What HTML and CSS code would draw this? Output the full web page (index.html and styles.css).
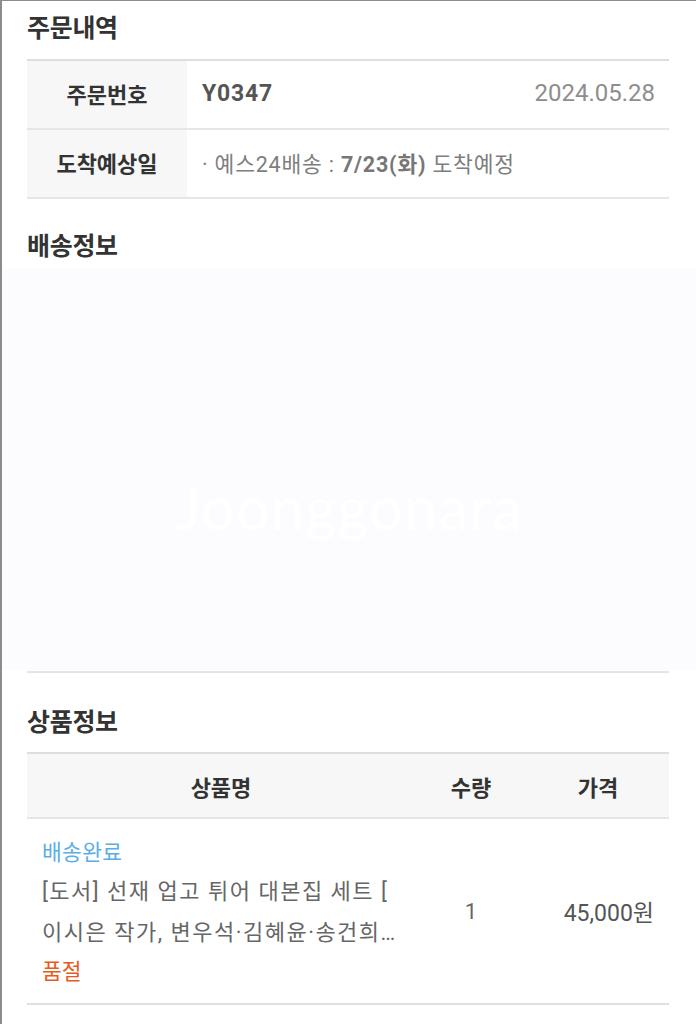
FILE: index.html
```
<!DOCTYPE html>
<html lang="ko">
<head>
<meta charset="utf-8">
<link rel="stylesheet" href="styles.css">
</head>
<body>
<div class="frame">
  <section class="sec">
    <h2 class="title t-order">주문내역</h2>
    <div class="info">
      <div class="info-row">
        <div class="info-label">주문번호</div>
        <div class="info-val">
          <span class="order-no">Y0347</span>
          <span class="order-date">2024.05.28</span>
        </div>
      </div>
      <div class="info-row">
        <div class="info-label">도착예상일</div>
        <div class="info-val">
          <span class="arrive">· 예스24배송 : <b>7/23(화)</b> 도착예정</span>
        </div>
      </div>
    </div>
  </section>

  <section class="sec">
    <h2 class="title t-ship">배송정보</h2>
  </section>
  <div class="masked"><span class="wm">Joonggonara</span></div>
  <div class="sec"><div class="divider"></div></div>

  <section class="sec">
    <h2 class="title t-item">상품정보</h2>
    <div class="goods">
      <div class="g-head">
        <div class="g-name">상품명</div>
        <div class="g-qty">수량</div>
        <div class="g-price">가격</div>
      </div>
      <div class="g-row">
        <div class="g-name cell-name">
          <div class="status">배송완료</div>
          <div class="prod">[도서] 선재 업고 튀어 대본집 세트 [ 이시은 작가, 변우석·김혜윤·송건희·이승협 사인 인쇄본]</div>
          <div class="soldout">품절</div>
        </div>
        <div class="g-qty cell-qty">1</div>
        <div class="g-price cell-price">45,000원</div>
      </div>
    </div>
  </section>
</div>
</body>
</html>
```

FILE: styles.css
```
* { box-sizing: border-box; }
html, body { margin: 0; padding: 0; background: #fff; }
body {
  font-family: "Noto Sans CJK KR", "Noto Sans", "Liberation Sans", sans-serif;
  color: #333;
}
.frame {
  border-left: 2px solid #8c8c8c;
  border-top: 1px solid #8c8c8c;
  min-height: 1024px;
  overflow: hidden;
}
.sec { padding: 0 27px 0 25px; }
.title {
  margin: 0;
  font-size: 25px;
  line-height: 32px;
  font-weight: 700;
  color: #333;
  letter-spacing: -0.3px;
}
.t-order { margin-top: 9px; margin-bottom: 17px; }
.t-ship { margin-top: 29px; margin-bottom: 8px; }
.t-item { margin-top: 31px; margin-bottom: 16px; }

.info { border-top: 2px solid #dedede; }
.info-row {
  display: flex;
  height: 69px;
  border-bottom: 2px solid #e6e6e6;
}
.info-label {
  width: 160px;
  flex: none;
  background: #f7f7f7;
  display: flex;
  align-items: center;
  justify-content: center;
  font-size: 22px;
  font-weight: 700;
  color: #333;
  padding-bottom: 3px;
}
.info-val {
  flex: 1;
  display: flex;
  align-items: center;
  justify-content: space-between;
  padding: 0 14px 3px 15px;
  font-size: 22px;
}
.order-no { font-weight: 700; color: #555; font-family: "Roboto", "Noto Sans", sans-serif; font-size: 23px; letter-spacing: 0.8px; }
.order-date { color: #8e8e8e; font-family: "Roboto", "Noto Sans", sans-serif; font-size: 24px; }
.arrive { color: #7e7e7e; font-size: 21.5px; letter-spacing: 0.8px; font-family: "Roboto", "Noto Sans CJK KR", sans-serif; }
.arrive b { font-weight: 700; color: #777; }

.masked {
  height: 402px;
  background: #fcfbfe;
  display: flex;
  align-items: center;
  justify-content: center;
}
.wm {
  font-family: "Lato", "Roboto", sans-serif;
  font-size: 60px;
  font-weight: 400;
  color: #ffffff;
  margin-top: 76px;
  letter-spacing: 1px;
}
.divider { height: 2px; background: #e4e4e4; margin-top: 1px; }

.goods { border-top: 2px solid #dedede; }
.g-head, .g-row { display: flex; }
.g-head {
  background: #f7f7f7;
  height: 65px;
  align-items: center;
  border-bottom: 2px solid #e6e6e6;
  font-size: 22px;
  font-weight: 700;
  color: #333;
}
.g-name { width: 388px; flex: none; text-align: center; }
.g-qty { width: 112px; flex: none; text-align: center; }
.g-price { flex: 1; text-align: center; }
.g-row {
  border-bottom: 2px solid #e0e0e0;
  align-items: center;
  height: 186px;
}
.cell-name {
  text-align: left;
  padding: 14px 16px 0 15px;
  align-self: flex-start;
}
.status { color: #5aaee8; font-size: 21.5px; line-height: 36px; letter-spacing: 0.3px; }
.prod {
  color: #666;
  font-family: "Roboto", "Noto Sans CJK KR", sans-serif;
  font-size: 22px;
  line-height: 41px;
  letter-spacing: 1.5px;
  margin-top: 2px;
  display: -webkit-box;
  -webkit-line-clamp: 2;
  -webkit-box-orient: vertical;
  overflow: hidden;
}
.soldout { color: #e85a1c; font-size: 21.5px; line-height: 34px; }
.cell-qty { color: #666; font-size: 22px; font-family: "Roboto", sans-serif; }
.cell-price { color: #555; font-size: 23px; text-align: right; padding-right: 15px; font-family: "Roboto", "Noto Sans CJK KR", sans-serif; }
```
